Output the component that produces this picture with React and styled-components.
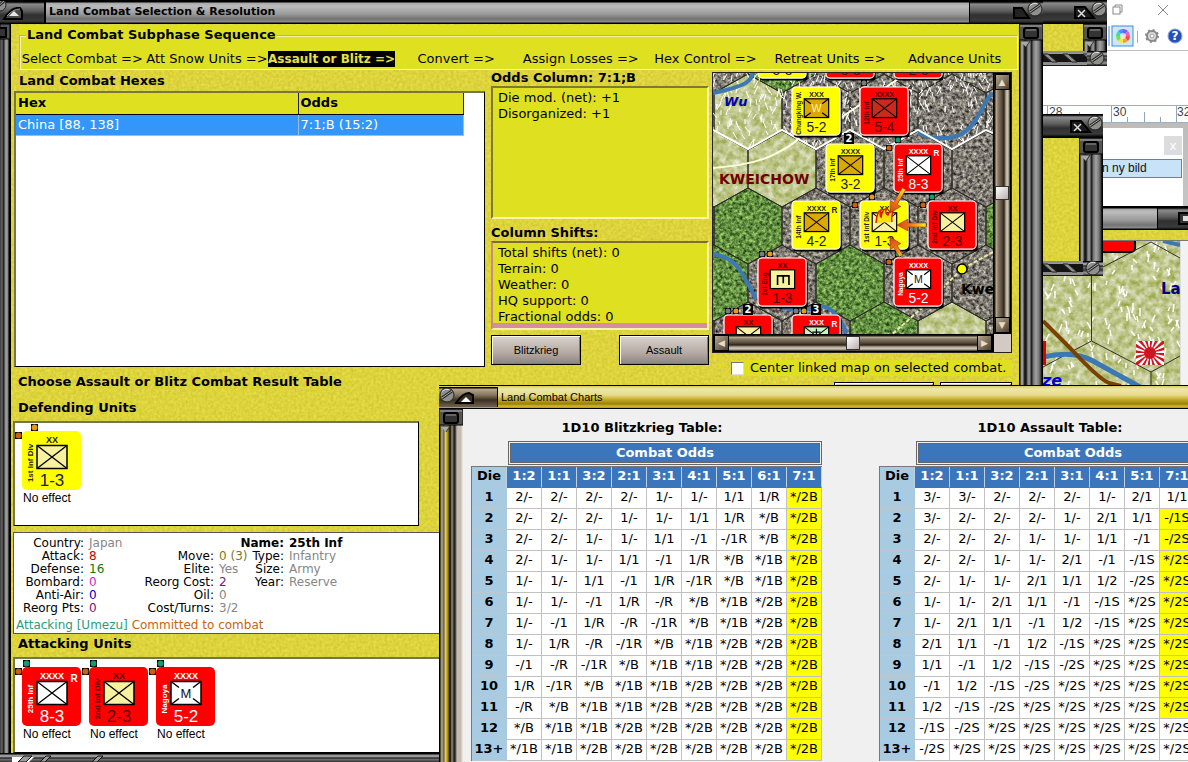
import React from 'react';
import styled, { createGlobalStyle, css } from 'styled-components';

const Global = createGlobalStyle`
  *, *::before, *::after { box-sizing: border-box; }
  body { margin: 0; background: #fff; color: #000; font: 13px/16px "DejaVu Sans", Verdana, sans-serif; }
  h1, h2, h3, p, ol, ul, dl, dd { margin: 0; padding: 0; }
  button { font: inherit; padding: 0; }
`;

/* ---------- desktop ---------- */

const Desktop = styled.main`
  position: relative;
  height: 100vh;
  overflow: hidden;
  background: #fff;
`;

const steelBar = 'linear-gradient(#000 0 2px, #a9a9a9 3px, #bcbcbc 6px, #9a9a9a 14px, #737373 19px, #8c8c8c 22px, #000 23px)';
const darkBar = 'linear-gradient(#000 0 1px, #8b8b8b 3px, #5c5c5c 10px, #303030 14px, #3a3a3a 20px, #000 23px)';
const steelRail = 'linear-gradient(90deg, #000 0 1px, #9b9b94 2px 4px, #2a2a2a 5px, #111 7px, #8d8d8d 9px, #8d8d8d 11px, #222 12px 13px, #6e6e6e 14px, #a2a2a2 17px, #777 20px, #3a3a3a 22px, #000 23px)';
const sand = '#ddd43c';
const lime = '#dfe120';

const AppWindow = styled.section`
  position: absolute;
  display: flex;
  flex-direction: column;
  overflow: hidden;
`;

const MainWindow = styled(AppWindow)`
  top: 0; left: 0; bottom: 0;
  width: calc(100% - 145px);
  z-index: 5;
`;
const ChartsWindow = styled(AppWindow)`
  top: 385px; left: 439px; right: 0; bottom: 0;
  z-index: 8;
  background: #f0f0f0;
  border-top: 1px solid #000;
`;
const PaintWindow = styled(AppWindow)`
  top: 0; right: 0; width: 145px; height: 230px;
  z-index: 1;
  background: #fff;
`;
const ToolWindow = styled(AppWindow)`
  right: ${p => p.$right}px;
  top: ${p => p.$top}px;
  width: ${p => p.$width}px;
  height: ${p => p.$height}px;
  z-index: 4;
`;
const MapWindow = styled(AppWindow)`
  top: 206px; right: 0; bottom: 0; width: 145px;
  z-index: 2;
`;

const TitleBar = styled.header`
  display: flex;
  align-items: center;
  height: 24px;
  flex: none;
  background: ${p => (p.$dark ? darkBar : steelBar)};
  h1 { padding-left: 3px; font-size: 11px; line-height: 16px; font-weight: bold; white-space: nowrap; }
`;

const TitleCap = styled.div`
  width: ${p => p.$width}px;
  height: 22px;
  flex: none;
  background: ${darkBar};
  border-left: ${p => (p.$end ? '1px solid #000' : '0')};
  border-right: ${p => (p.$end ? '0' : '2px solid #000')};
  margin-left: ${p => (p.$end ? 'auto' : '0')};
  svg { display: block; margin-left: ${p => (p.$end ? 'auto' : '0')}; }
`;
const CloseCap = styled.div`
  margin-left: auto;
  svg { display: block; }
`;

const WindowRow = styled.div`
  display: flex;
  flex: 1;
  min-height: 0;
`;
const Rail = styled.div`
  flex: none;
  width: 24px;
  background: ${steelRail};
  svg { display: block; }
`;
const LeftRail = styled.div`
  flex: none;
  width: 11px;
  background: linear-gradient(90deg, #444 0 1px, #777 2px, #222 3px 4px, #8a8a8a 5px, #a0a0a0 7px, #777 8px, #000 9px 11px);
  svg { display: block; }
`;
const BottomFrame = styled.footer`
  height: ${p => p.$height}px;
  flex: none;
  overflow: hidden;
  background: linear-gradient(#000 0 1px, #9a9a9a 2px 4px, #000 5px, #777 6px, #333 9px, #999 12px, #000 15px);
  svg { display: block; }
`;
const Sand = styled.div`
  position: relative;
  display: flex;
  flex-direction: column;
  flex: 1;
  min-width: 0;
  background: ${sand};
  overflow: hidden;
`;
const Grain = styled.svg`
  position: absolute;
  inset: 0;
  width: 100%;
  height: 100%;
`;

function SandGrain({ id }) {
  return (
    <Grain aria-hidden="true">
      <filter id={id} x="0" y="0" width="100%" height="100%" colorInterpolationFilters="sRGB">
        <feTurbulence type="fractalNoise" baseFrequency="0.35" numOctaves="3" seed="4" />
        <feColorMatrix values="0.5 0 0 0 0.62  0.5 0 0 0 0.58  0.3 0 0 0 0.1  0 0 0 0 1" />
      </filter>
      <rect width="100%" height="100%" filter={`url(#${id})`} opacity="0.3" />
    </Grain>
  );
}

function Screw({ cx, cy, r = 7 }) {
  return (
    <g>
      <circle cx={cx} cy={cy} r={r} fill="#8f8f8b" stroke="#222" />
      <path d={`M${cx - r + 2} ${cy - r / 2}a${r} ${r} 0 0 1 ${r} -2`} stroke="#ddd" fill="none" />
      <path d={`M${cx - r + 2} ${cy + 3}L${cx + r - 2} ${cy - 4}`} stroke="#2a2a2a" strokeWidth="3" />
      <path d={`M${cx - r + 2} ${cy + 3}L${cx + r - 2} ${cy - 4}`} stroke="#a9a9a9" />
    </g>
  );
}

function Knob() {
  return (
    <svg width="24" height="24" aria-hidden="true">
      <path d="M0 0h24v16h-24z" fill="#555" stroke="#000" />
      <path d="M1 2h22" stroke="#aaa" />
      <rect x="5" y="4" width="14" height="10" rx="2" fill="#333" stroke="#000" strokeWidth="2" />
      <path d="M7 6h10" stroke="#999" />
      <path d="M1 17h10l-4 6" fill="#aaa" stroke="#333" />
    </svg>
  );
}

function Lattice({ width = 40 }) {
  const bars = [];
  for (let x = 0; x < width; x += 20) bars.push(x);
  return (
    <svg width={width} height="15" aria-hidden="true">
      <path d={`M0 1h${width}M0 13h${width}`} stroke="#8d8d8d" strokeWidth="2" />
      <path d={`M0 3h${width}v8h-${width}z`} fill="#141414" />
      {bars.map(x => <path key={x} d={`M${x} 3l9 8h5l-9 -8z`} fill="#8d8d8d" stroke="#222" />)}
    </svg>
  );
}

function CapStart() {
  return (
    <svg width="44" height="22" aria-hidden="true">
      <Screw cx={0} cy={4} r={6} />
      <path d="M4 18q6 -10 13 -11h3l2 3v8z" fill="#4a4a4a" stroke="#000" strokeWidth="2" />
      <path d="M7 15q6 -7 13 -7" stroke="#999" fill="none" />
      <path d="M9 15l5 -5l5 5z" fill="#e6e6e6" />
    </svg>
  );
}

function CapEnd({ close }) {
  return (
    <svg width="46" height="22" aria-hidden="true">
      {close ? (
        <g>
          <path d="M14 6h10l9 11h-19z" fill="#1b1b1b" stroke="#000" strokeWidth="2" />
          <path d="M17 9l7 7M24 9l-7 7" stroke="#ddd" strokeWidth="1.500" />
        </g>
      ) : (
        <path d="M17 7h8l7 10h-15z" fill="#222" stroke="#000" strokeWidth="2" />
      )}
      <Screw cx={38} cy={8} />
    </svg>
  );
}

/* ---------- counters ---------- */

const PIPS = { grey: '#7c7c7c', gold: '#e69a17', brown: '#c8600f', teal: '#139a72' };

function Pip({ x, y, tone, s = 7 }) {
  return (
    <g>
      <rect x={x} y={y} width={s} height={s} fill="#000" />
      <circle cx={x + s / 2} cy={y + s / 2} r={s * 0.42} fill={PIPS[tone]} />
    </g>
  );
}

const CounterSvg = styled.svg`
  display: block;
  overflow: visible;
  text { font-family: "Liberation Sans", Arial, sans-serif; }
`;

const CROSS = <path d="M15 14.500l30 23M45 14.500l-30 23" stroke="#000" strokeWidth="1.300" />;

function CounterFace({ side, ink, name, size, symbol, box, value, reserve, onMap }) {
  const bg = side === 'china' ? '#ff0' : '#f00';
  return (
    <g>
      {onMap && <rect x="2" y="3" width="59" height="59" rx="4" fill="#000" />}
      <rect width="59" height="59" rx="5" fill={bg} stroke={onMap ? '#fff' : 'none'} strokeWidth="1.500" />
      {size && <text x="30" y="12" fontSize="9" fontWeight="bold" textAnchor="middle" fill={ink}>{size}</text>}
      {reserve && <text x="52" y="15" fontSize="10" fontWeight="bold" textAnchor="middle" fill={ink}>R</text>}
      <rect x="15" y="14.500" width="30" height="23" fill={box} stroke="#000" strokeWidth="1.500" />
      {symbol === 'X' && CROSS}
      {(symbol === 'M' || symbol === 'W') && (
        <g>
          <path d="M15 14.500l8 6M45 14.500l-8 6M15 37.500l8 -6M45 37.500l-8 -6" stroke="#000" strokeWidth="1.500" />
          <text x="30" y="31" fontSize="13" textAnchor="middle" fill={symbol === 'W' ? '#fff3b0' : '#111'}>{symbol}</text>
        </g>
      )}
      {symbol === 'E' && <path d="M24 33v-11h14v11M31 22v9" stroke="#000" strokeWidth="2" fill="none" />}
      {symbol === 'A' && <g>{CROSS}<path d="M30 17v16M25 21h10M23 28q1 6 7 6t7 -6" stroke="#000" strokeWidth="1.500" fill="none" /></g>}
      {value && <text x="30" y="55" fontSize="17" textAnchor="middle" fill={ink}>{value}</text>}
      {name && <text transform="translate(11 32) rotate(-90)" fontSize="8" fontWeight="bold" textAnchor="middle" fill={ink}>{name}</text>}
    </g>
  );
}

const UnitFigure = styled.figure`
  margin: 0;
  width: 59px;
  font: 12px/16px "Liberation Sans", Arial, sans-serif;
  figcaption { white-space: nowrap; padding-left: 1px; }
`;

function UnitCard({ unit, pips }) {
  return (
    <UnitFigure>
      <CounterSvg width="59" height="59" viewBox="0 0 59 59">
        <CounterFace {...unit} />
        {pips.map(p => <Pip key={p.tone} {...p} />)}
      </CounterSvg>
      <figcaption>No effect</figcaption>
    </UnitFigure>
  );
}

/* ---------- campaign map ---------- */

const ROW = { Z: -18, A: 39, B: 96, C: 153, D: 210, E: 267 };
const HEXES = [
  ['Z', 1, 'peak'], ['Z', 69, 'wood'], ['Z', 137, 'peak'], ['Z', 205, 'peak'], ['Z', 273, 'peak'],
  ['A', 35, 'plain'], ['A', 103, 'peak'], ['A', 171, 'peak'], ['A', 239, 'peak'], ['A', -33, 'plain'], ['A', 307, 'peak'],
  ['B', 1, 'plain'], ['B', 69, 'plain'], ['B', 137, 'peak'], ['B', 205, 'peak'], ['B', 273, 'peak'],
  ['C', -33, 'peak'], ['C', 35, 'wood'], ['C', 103, 'peak'], ['C', 171, 'peak'], ['C', 239, 'peak'], ['C', 307, 'wood'],
  ['D', 1, 'wood'], ['D', 69, 'peak'], ['D', 137, 'wood'], ['D', 205, 'peak'], ['D', 273, 'peak'],
  ['E', -33, 'peak'], ['E', 35, 'peak'], ['E', 103, 'peak'], ['E', 171, 'wood'], ['E', 239, 'plain'], ['E', 307, 'peak'],
];
const LAND = { plain: '#bfc78c', wood: '#638f42', peak: '#7f7b73' };
const hexPath = (x, y) => `M${x} ${y - 38}l34 19v38l-34 19l-34 -19v-38z`;

function snowStrokes(x0, y0, w, h, n, seed) {
  let s = seed;
  const rnd = () => { s = (s * 16807) % 2147483647; return s / 2147483647; };
  let d = '';
  for (let i = 0; i < n; i += 1) {
    const x = Math.round(x0 + rnd() * w);
    const y = Math.round(y0 + rnd() * h);
    const dx = Math.round(rnd() * 8 - 4);
    const dy = Math.round(4 + rnd() * 4);
    d += `M${x} ${y}l${dx} ${dy}`;
  }
  return d;
}

const TEXTURES = [['plain', 0.15, 0.9, 0.05], ['wood', 0.3, 1.1, -0.05], ['peak', 0.3, 1.1, -0.05]];

function TerrainFilters({ prefix }) {
  return (
    <defs>
      {TEXTURES.map(([n, f, k, o]) => (
        <filter key={n} id={prefix + n} x="0" y="0" width="100%" height="100%" colorInterpolationFilters="sRGB">
          <feTurbulence type="fractalNoise" baseFrequency={f} numOctaves="4" seed="7" />
          <feColorMatrix values={`${k} 0 0 0 ${o} ${k} 0 0 0 ${o} ${k} 0 0 0 ${o} 0 0 0 0 1`} result="n" />
          <feBlend in="SourceGraphic" in2="n" mode="hard-light" result="even" />
          <feBlend in="n" in2="SourceGraphic" mode="overlay" />
          <feComposite in2="SourceGraphic" operator="in" />
        </filter>
      ))}
    </defs>
  );
}

const MAP_UNITS = [
  { x: 69, y: -18, side: 'china', ink: '#222', symbol: 'X', box: '#dba800', value: '5-3' },
  { x: 137, y: -18, side: 'japan', ink: '#600', symbol: 'X', box: '#fff', value: '3-3' },
  { x: 205, y: -18, side: 'japan', ink: '#600', symbol: 'X', box: '#fff', value: '2-3' },
  { x: 103, y: 39, side: 'china', ink: '#222', name: 'Chungking W.', size: 'XXX', symbol: 'W', box: '#dba800', value: '5-2' },
  { x: 171, y: 39, side: 'japan', ink: '#5a0000', name: '12th Inf', size: 'XXXX', symbol: 'X', box: '#c82a1c', value: '5-4' },
  { x: 137, y: 96, side: 'china', ink: '#222', name: '17th Inf', size: 'XXXX', symbol: 'X', box: '#dba800', value: '3-2' },
  { x: 205, y: 96, side: 'japan', ink: '#fff', name: '25th Inf', size: 'XXXX', symbol: 'X', box: '#fff', value: '8-3', reserve: true },
  { x: 103, y: 153, side: 'china', ink: '#222', name: '14th Inf', size: 'XXXX', symbol: 'X', box: '#dba800', value: '4-2', reserve: true },
  { x: 171, y: 153, side: 'china', ink: '#222', name: '1st Inf Div', size: 'XX', symbol: 'X', box: '#f7f1a0', value: '1-3' },
  { x: 239, y: 153, side: 'japan', ink: '#5a0000', name: '2nd Inf Div', size: 'XX', symbol: 'X', box: '#f7f1a0', value: '2-3' },
  { x: 69, y: 210, side: 'japan', ink: '#5a0000', name: '1st Eng', size: 'XX', symbol: 'E', box: '#f7f1a0', value: '1-3' },
  { x: 205, y: 210, side: 'japan', ink: '#fff', name: 'Nagoya', size: 'XXXX', symbol: 'M', box: '#fff', value: '5-2' },
  { x: 35, y: 267, side: 'japan', ink: '#5a0000', name: 'f Div', size: 'XX', symbol: 'X', box: '#f7f1a0' },
  { x: 103, y: 267, side: 'japan', ink: '#fff', name: 'uanl', size: 'XXX', symbol: 'A', box: '#c8f5c8', reserve: true },
];
const MAP_PIPS = [
  [151, 10, 'grey'], [185, 67, 'teal'], [176, 75, 'brown'], [159, 124, 'gold'], [142, 132, 'brown'],
  [219, 124, 'teal'], [210, 132, 'brown'], [49, 181, 'grey'], [57, 181, 'gold'], [185, 181, 'teal'],
  [176, 189, 'brown'], [15, 238, 'grey'], [23, 238, 'gold'], [83, 238, 'grey'], [91, 238, 'gold'],
];

const MapSvg = styled.svg`
  display: block;
  width: 100%;
  height: 100%;
  background: ${p => p.$ground};
  font-family: "DejaVu Sans", Verdana, sans-serif;
  font-weight: bold;
`;

function Arrow({ x, y, angle, length }) {
  return (
    <path
      transform={`translate(${x} ${y}) rotate(${angle})`}
      d={`M0 0l11 -6v4h${length - 11}v4h-${length - 11}v4z`}
      fill="url(#arrow)" stroke="#8a2a00" strokeWidth="0.500"
    />
  );
}

function CampaignMap() {
  return (
    <MapSvg $ground="#7f7b73" viewBox="0 0 280 261" preserveAspectRatio="xMinYMin slice" role="img" aria-label="Kweichow front">
      <TerrainFilters prefix="front-" />
      <defs>
        <linearGradient id="arrow" gradientUnits="userSpaceOnUse" x1="0" y1="0" x2="28" y2="0"><stop offset="0" stopColor="#d8431a" /><stop offset="0.500" stopColor="#ee7a1a" /><stop offset="1" stopColor="#ffe81a" /></linearGradient>
        <clipPath id="snowline"><path d="M-40 -10H320V57H273l-34 19L205 57L171 76L137 57L103 76L69 57L35 76L0 57z" /></clipPath>
      </defs>
      {['plain', 'wood', 'peak'].map(kind => (
        <g key={kind} filter={`url(#front-${kind})`}>
          {HEXES.filter(h => h[2] === kind).map(h => <path key={h[0] + h[1]} d={hexPath(h[1], ROW[h[0]])} fill={LAND[kind]} />)}
        </g>
      ))}
      <g fill="none" stroke="#2c2c26" strokeWidth="1">
        {HEXES.map(h => <path key={h[0] + h[1]} d={hexPath(h[1], ROW[h[0]])} />)}
      </g>
      <path clipPath="url(#snowline)" d={snowStrokes(0, -5, 280, 80, 380, 77)} stroke="#fff" strokeWidth="1" />
      <g fill="none" stroke="#3c78b4" strokeWidth="4">
        <path d="M0 20q28 -6 34 -11t5 -9" />
        <path d="M205 60q20 8 36 4t27 -26t12 -14" />
        <path d="M0 181q18 3 26 15t17 30" />
        <path d="M69 235q26 3 38 -1t27 26" />
      </g>
      <path d="M0 57L35 76L69 57L103 76L137 57L171 76L205 57L239 76L273 57L280 60" fill="none" stroke="#fff" strokeWidth="2" />
      <path d="M0 95Q40 92 60 82T86 65M120 50L200 -4" fill="none" stroke="#fffde0" strokeWidth="2" />
      <path d="M280 179L249 196L210 234L176 264" fill="none" stroke="#eee9a8" strokeWidth="2" strokeDasharray="4 2" />
      <text x="11" y="33" fontSize="13" fontStyle="italic" fill="#0000b4">Wu</text>
      <text x="6" y="111" fontSize="14" fill="#6e0000">KWEICHOW</text>
      <circle cx="249" cy="196" r="5" fill="#ff0" stroke="#000" strokeWidth="1.500" />
      <text x="248" y="221" fontSize="14">Kwe</text>
      {MAP_UNITS.map(u => (
        <g key={`${u.x},${u.y}`} transform={`translate(${u.x - 24} ${u.y - 25}) scale(0.815)`} fontFamily="Liberation Sans" fontWeight="normal">
          <CounterFace {...u} onMap />
        </g>
      ))}
      {MAP_PIPS.map(([x, y, tone]) => <Pip key={`${x},${y}`} x={x - 3} y={y - 3} tone={tone} s={6} />)}
      {[[136, 65, 2], [35, 236, 2], [103, 236, 3]].map(([x, y, n]) => (
        <g key={x}>
          <rect x={x - 5} y={y - 5} width="10" height="11" fill="#000" />
          <text x={x} y={y + 4} fontSize="10" textAnchor="middle" fill="#fff">{n}</text>
        </g>
      ))}
      <path d="M163 150q1 -12 5 -13q-2 5 0 7q2 -9 5 -8q-1 5 2 6q2 -6 5 -5q-2 9 -1 12" stroke="#d81e00" strokeWidth="1.500" fill="#ffe000" />
      <Arrow x={177} y={140} angle={-60} length={28} />
      <Arrow x={184} y={152} angle={0} length={29} />
      <Arrow x={177} y={164} angle={60} length={22} />
    </MapSvg>
  );
}

const MapGrid = styled.div`
  display: grid;
  grid-template: 261px 18px / minmax(0, 1fr) 18px;
  margin-top: 2px;
  border: 1px solid #222;
  height: 281px;
  overflow: hidden;
`;
const Scroller = styled.div`
  display: flex;
  flex-direction: ${p => (p.$vertical ? 'column' : 'row')};
  align-items: center;
  border: 1px solid #000;
  background: linear-gradient(${p => (p.$vertical ? '90deg' : '180deg')}, #1c1812 0 1px, #c0b5a0 2px, #8a7c66 4px, #54483a 8px, #2a2219 10px, #b8ab96 12px, #d3c8b6 14px, #2a2219 16px);
`;
const Track = styled.span`flex: ${p => p.$share};`;
const ScrollArrow = styled.button`
  width: 15px;
  height: 16px;
  border: 1px solid #000;
  background: linear-gradient(135deg, #b5a68e, #4a3e30);
  color: #e8dcc6;
  font-size: 9px;
  line-height: 12px;
`;
const ScrollThumb = styled.span`
  width: 14px;
  height: 14px;
  background: linear-gradient(135deg, #fff, #b8aeac);
  border: 1px solid #333;
`;
const ScrollCorner = styled.div`background: #d3cac6; border-left: 1px solid #000;`;

/* ---------- phase sequence ---------- */

const SequencePanel = styled.div`
  margin: 1px 1px 0 8px;
  padding-top: 2px;
  background: ${lime};
`;
const SequenceBox = styled.fieldset`
  margin: 0;
  padding: 8px 0 2px;
  border: 1px solid #b4b45c;
  box-shadow: inset 1px 1px #f4f4b0;
  border-right-color: #f7f7c0;
  border-bottom-color: #f7f7c0;
  min-width: 0;
  legend { margin-left: 6px; padding: 0 1px; font-weight: bold; background: ${lime}; }
`;
const Steps = styled.ol`
  display: grid;
  grid-template-columns: repeat(8, minmax(0, 1fr));
  list-style: none;
`;
const Step = styled.li`
  justify-self: center;
  white-space: nowrap;
  ${p => p.$active && css`
    background: #000;
    color: #e8e04a;
    font-weight: bold;
    font-size: 12px;
  `}
`;
const STEPS = ['Select Combat =>', 'Att Snow Units =>', 'Assault or Blitz =>', 'Convert =>', 'Assign Losses =>', 'Hex Control =>', 'Retreat Units =>', 'Advance Units'];

/* ---------- main window body ---------- */

const MainContent = styled.div`
  position: relative;
`;
const TopGrid = styled.div`
  display: grid;
  grid-template-columns: minmax(0, 1fr) 218px 300px;
  column-gap: 3px;
  padding: 0 7px 0 3px;
  height: 297px;
`;
const Column = styled.div`
  min-width: 0;
  display: flex;
  flex-direction: column;
  padding-right: ${p => (p.$lead ? 3 : 0)}px;
`;
const SectionTitle = styled.h2`
  font-size: 13px;
  line-height: 16px;
  padding-left: ${p => (p.$inset ? 5 : 0)}px;
  margin-top: ${p => p.$top || 0}px;
  margin-bottom: ${p => p.$bottom || 0}px;
  white-space: nowrap;
`;
const WhiteBox = styled.div`
  background: #fff;
  border: 2px solid;
  border-color: #77754a #000 #000 #77754a;
`;
const HexBox = styled(WhiteBox)`
  height: 276px;
  border-width: 2px 1px 1px 2px;
`;
const HexTable = styled.table`
  width: 448px;
  table-layout: fixed;
  border-collapse: collapse;
  text-align: left;
  td, th { height: 21px; padding: 0 2px; border-right: 1px solid #222; }
  th { background: ${lime}; border-bottom: 1px solid #000; }
  td { background: #3296fa; color: #fff; border-color: #9cc0d8; border-bottom: 1px solid #9cc0d8; }
  th:first-child { width: 282px; }
`;
const Readout = styled.div`
  height: ${p => p.$height}px;
  flex: none;
  padding: 2px 5px;
  background: ${lime};
  border: 2px solid;
  border-color: #7e7c2c #f7f3b0 #f7f3b0 #7e7c2c;
  ${p => p.$rose && css`
    border-color: #7e6c3c #f7f3b0 #f7f3b0 #c98a80;
    box-shadow: inset 0 -5px #d78da0;
  `}
`;
const ButtonRow = styled.div`
  display: flex;
  justify-content: space-between;
  margin-top: 5px;
`;
const MetalButton = styled.button`
  width: 90px;
  height: 30px;
  border: 1px solid #000;
  box-shadow: inset 1px 1px #fff, inset -1px -1px #857a74;
  background: linear-gradient(#dad3cd, #b5aaa4 60%, #8d827c);
  font: 11px/16px "Liberation Sans", Arial, sans-serif;
`;
const CheckLabel = styled.label`
  display: flex;
  align-items: center;
  gap: 6px;
  margin: 7px 0 6px 19px;
  white-space: nowrap;
  background: ${lime};
  input { appearance: none; width: 13px; height: 13px; margin: 0; flex: none; background: #fff; border: 1px solid; border-color: #777 #ddd #ddd #777; }
`;
const HiddenButtons = styled.div`
  display: flex;
  justify-content: flex-end;
  gap: 6px;
`;
const PeekButton = styled(MetalButton)`width: ${p => p.$width}px;`;

const UnitBox = styled(WhiteBox)`
  display: flex;
  gap: 8px;
  padding: 8px 0 0 7px;
  border-width: 2px 1px 1px 2px;
  height: ${p => p.$height}px;
  width: ${p => (p.$short ? '406px' : '100%')};
`;
const LowerSection = styled.div`padding: 7px 0 0 2px;`;
const InfoBox = styled(WhiteBox)`
  margin: 6px 0 2px;
  height: 102px;
  padding: 2px 0 0;
  border-width: 1px;
  border-color: #555;
`;
const Facts = styled.div`
  display: grid;
  grid-template-columns: 70px 40px 80px 28px 32px 1fr;
  grid-auto-rows: 13px;
  column-gap: 5px;
  font-size: 12px;
  line-height: 16px;
  white-space: nowrap;
  span:nth-child(odd) { text-align: right; }
`;
const Fact = styled.span`
  color: ${p => p.$color || '#000'};
  font-weight: ${p => (p.$bold ? 'bold' : 'normal')};
  grid-column: ${p => p.$col || 'auto'};
`;
const Status = styled.p`
  margin-top: 4px;
  padding-left: 2px;
  font-size: 12px;
  line-height: 16px;
  color: #2a9d78;
  span { color: #c86414; }
`;

const grey = '#868686';
const FACTS = [
  ['Attack:', '8', '#c80000'], ['Move:', '0 (3)', '#7a7a1c'], ['Type:', 'Infantry', grey],
  ['Defense:', '16', '#0a7a0a'], ['Elite:', 'Yes', grey], ['Size:', 'Army', grey],
  ['Bombard:', '0', '#d21ed2'], ['Reorg Cost:', '2', '#78147a'], ['Year:', 'Reserve', grey],
  ['Anti-Air:', '0', '#0000c8'], ['Oil:', '0', grey], ['', '', grey],
  ['Reorg Pts:', '0', '#78147a'], ['Cost/Turns:', '3/2', grey], ['', '', grey],
];

const DEFENDER = { side: 'china', ink: '#222', name: '1st Inf Div', size: 'XX', symbol: 'X', box: '#f7f1a0', value: '1-3' };
const ATTACKERS = [
  { side: 'japan', ink: '#fff', name: '25th Inf', size: 'XXXX', symbol: 'X', box: '#fff', value: '8-3', reserve: true },
  { side: 'japan', ink: '#5a0000', name: '2nd Inf Div', size: 'XX', symbol: 'X', box: '#f7f1a0', value: '2-3' },
  { side: 'japan', ink: '#fff', name: 'Nagoya', size: 'XXXX', symbol: 'M', box: '#fff', value: '5-2' },
];

/* ---------- charts window ---------- */

const GoldTitle = styled.header`
  display: flex;
  align-items: center;
  height: 23px;
  flex: none;
  border-bottom: 1px solid #000;
  background: linear-gradient(#d8ca60, #efe6a8 3px, #e8dc8c 9px, #c0a620 14px, #97800c 18px, #d2b72a 20px, #b89c1c);
  h1 { font: 11px/16px "Liberation Sans", Arial, sans-serif; padding-left: 3px; white-space: nowrap; }
`;
const GoldCap = styled.div`
  width: 59px;
  height: 20px;
  flex: none;
  border-right: 1px solid #000;
  background: linear-gradient(#000 0 1px, #b5a68c 2px, #86775f 8px, #3c3022 13px, #6f6350);
  svg { display: block; }
`;
const GoldRail = styled.div`
  width: 24px;
  flex: none;
  background: linear-gradient(90deg, #000 0 1px, #a09478 2px 4px, #4a3e28 5px, #e8dc80 6px, #c4a41c 8px, #5a4a10 10px, #000 11px, #999078 13px, #222 15px 16px, #c4bcae 18px 22px, #e8e4da 23px);
  svg { display: block; }
`;
const Charts = styled.div`
  display: flex;
  gap: 57px;
  padding: 11px 0 0 8px;
  overflow: hidden;
`;
const Chart = styled.article`
  flex: none;
  width: 351px;
  h2 { font-size: 13px; line-height: 16px; text-align: center; padding-right: 9px; }
`;
const OddsBanner = styled.div`
  margin: 5px 0 1px 37px;
  height: 24px;
  line-height: 18px;
  border: 3px double #666;
  background: #3b76bc;
  background-clip: padding-box;
  color: #fff;
  font-weight: bold;
  text-align: center;
`;
const ChartTable = styled.table`
  border-collapse: separate;
  border-spacing: 0;
  table-layout: fixed;
  width: 351px;
  border-top: 1px solid #777;
  border-left: 1px solid #777;
  text-align: center;
  th, td { height: 21px; padding: 0 0 2px; border-right: 1px solid #c0c0c0; border-bottom: 1px solid #c0c0c0; white-space: nowrap; }
  th { background: #a9cbe2; border-right-color: #a9cbe2; }
  thead th { background: #3b76bc; color: #fff; border-bottom-color: #3b76bc; border-right-color: #c0d0e0; }
  thead th:first-child { width: 35px; background: #a9cbe2; color: #000; border-bottom-color: #a9cbe2; }
  tbody th { border-bottom-color: #bcc8d0; }
`;
const Result = styled.td`
  background: ${p => (p.$hot ? '#ff0' : '#fff')};
`;

const BLITZ_ODDS = ['1:2', '1:1', '3:2', '2:1', '3:1', '4:1', '5:1', '6:1', '7:1'];
const BLITZ = [
  '2/- 2/- 2/- 2/- 1/- 1/- 1/1 1/R */2B',
  '2/- 2/- 2/- 1/- 1/- 1/1 1/R */B */2B',
  '2/- 2/- 1/- 1/- 1/1 -/1 -/1R */B */2B',
  '2/- 1/- 1/- 1/1 -/1 1/R */B */1B */2B',
  '1/- 1/- 1/1 -/1 1/R -/1R */B */1B */2B',
  '1/- 1/- -/1 1/R -/R */B */1B */2B */2B',
  '1/- -/1 1/R -/R -/1R */B */1B */2B */2B',
  '1/- 1/R -/R -/1R */B */1B */2B */2B */2B',
  '-/1 -/R -/1R */B */1B */1B */2B */2B */2B',
  '1/R -/1R */B */1B */1B */2B */2B */2B */2B',
  '-/R */B */1B */1B */2B */2B */2B */2B */2B',
  '*/B */1B */1B */2B */2B */2B */2B */2B */2B',
  '*/1B */1B */2B */2B */2B */2B */2B */2B */2B',
].map(r => r.split(' '));
const ASSAULT_ODDS = ['1:2', '1:1', '3:2', '2:1', '3:1', '4:1', '5:1', '7:1', ''];
const ASSAULT = [
  '3/- 3/- 2/- 2/- 2/- 1/- 2/1 1/1',
  '3/- 2/- 2/- 2/- 1/- 2/1 1/1 -/1S',
  '2/- 2/- 2/- 1/- 1/- 1/1 -/1 -/2S',
  '2/- 2/- 1/- 1/- 2/1 -/1 -/1S */2S',
  '2/- 1/- 1/- 2/1 1/1 1/2 -/2S */2S',
  '1/- 1/- 2/1 1/1 -/1 -/1S */2S */2S',
  '1/- 2/1 1/1 -/1 1/2 -/1S */2S */2S',
  '2/1 1/1 -/1 1/2 -/1S */2S */2S */2S',
  '1/1 -/1 1/2 -/1S -/2S */2S */2S */2S',
  '-/1 1/2 -/1S -/2S */2S */2S */2S */2S',
  '1/2 -/1S -/2S */2S */2S */2S */2S */2S',
  '-/1S -/2S */2S */2S */2S */2S */2S */2S',
  '-/2S */2S */2S */2S */2S */2S */2S */2S',
].map(r => [...r.split(' '), '']);

function ResultChart({ title, odds, rows, isHot }) {
  return (
    <Chart>
      <h2>{title}</h2>
      <OddsBanner>Combat Odds</OddsBanner>
      <ChartTable>
        <thead>
          <tr><th>Die</th>{odds.map((o, i) => <th key={i}>{o}</th>)}</tr>
        </thead>
        <tbody>
          {rows.map((row, r) => (
            <tr key={r}>
              <th>{r === 12 ? '13+' : r + 1}</th>
              {row.map((v, c) => <Result key={c} $hot={isHot(r, c)}>{v}</Result>)}
            </tr>
          ))}
        </tbody>
      </ChartTable>
    </Chart>
  );
}

/* ---------- picture editor behind ---------- */

const EditorTop = styled.div`
  height: 51px;
  flex: none;
  border-bottom: 1px solid #b8c0c8;
  svg { display: block; margin-left: auto; }
`;
const Ruler = styled.div`
  height: 18px;
  flex: none;
  margin-top: 54px;
  border: solid #9ab0c0;
  border-width: 1px 0;
  svg { display: block; margin-left: auto; font: 12px "Liberation Sans", Arial, sans-serif; }
`;
const EditorCanvas = styled.div`
  flex: 1;
  padding: 5px 5px 0 0;
  background: linear-gradient(#bcbcbc, #c8c8c8);
`;
const ToastPanel = styled.div`
  height: 100%;
  background: #fff;
  padding: 8px 1px;
`;
const ToastClose = styled.button`
  display: block;
  margin-left: auto;
  width: 18px;
  height: 19px;
  border: 0;
  background: #dcdcdc;
  color: #fff;
  font-size: 12px;
`;
const ToastItem = styled.a`
  display: block;
  margin-top: 4px;
  padding-left: 57px;
  height: 19px;
  line-height: 17px;
  border: 1px solid #3c8cdc;
  background: #c8e2fa;
  color: #111;
  text-decoration: none;
  white-space: nowrap;
  font-family: "Liberation Sans", Arial, sans-serif;
  font-size: 12px;
`;

function EditorIcons() {
  const hues = ['#ff4a4a', '#ff9a3c', '#f7e83c', '#7ee04a', '#3cd8c0', '#4a90ff', '#7a5cf0', '#e85ce0'];
  return (
    <svg width="80" height="50" aria-hidden="true">
      <rect x="5" y="7" width="7" height="7" fill="#fff" stroke="#888" />
      <path d="M7 7v-2h7v7h-2" fill="none" stroke="#888" />
      <path d="M50 5l10 10M60 5l-10 10" stroke="#888" />
      <path d="M1 26v20" stroke="#3c8cdc" />
      <rect x="4" y="26" width="21" height="20" fill="#cfe6fb" stroke="#3c8cdc" />
      {hues.map((h, i) => {
        const a = (i / 8) * Math.PI * 2;
        const b = ((i + 1) / 8) * Math.PI * 2;
        return <path key={h} fill={h} d={`M15 36L${15 + 7 * Math.cos(a)} ${36 + 7 * Math.sin(a)}A7 7 0 0 1 ${15 + 7 * Math.cos(b)} ${36 + 7 * Math.sin(b)}z`} />;
      })}
      <circle cx="15" cy="36" r="3" fill="#fff" opacity="0.700" />
      <path d="M29.500 31v12" stroke="#aaa" />
      <circle cx="44" cy="36" r="5" fill="#ddd" stroke="#888" strokeWidth="2" />
      <circle cx="44" cy="36" r="6" fill="none" stroke="#888" strokeWidth="2" strokeDasharray="2 2.700" />
      <circle cx="44" cy="36" r="2" fill="#fff" stroke="#999" />
      <circle cx="67" cy="36" r="7" fill="#2450b8" stroke="#8aa4dc" />
      <text x="67" y="40" fontSize="12" fontWeight="bold" textAnchor="middle" fill="#fff">?</text>
    </svg>
  );
}

function RulerTicks() {
  return (
    <svg width="145" height="16" aria-hidden="true">
      <path d="M4.500 0v16M68.500 0v16M133.500 0v16M36.500 6v10M101.500 6v10M20.500 11v5M52.500 11v5M84.500 11v5M117.500 11v5" stroke="#8fa8bc" />
      <g fill="#444" fontSize="12"><text x="6" y="10">28</text><text x="70" y="10">30</text><text x="134" y="10">32</text></g>
    </svg>
  );
}

const OverviewRow = styled.div`
  position: relative;
  display: flex;
  flex: 1;
  min-height: 0;
  margin-top: 10px;
  border-top: 1px solid #777;
`;
const OverviewScroll = styled.div`width: 8px; flex: none; background: #f2f2f2; border-left: 1px solid #ddd;`;

function OverviewMap() {
  const rays = [];
  for (let i = 0; i < 16; i += 1) {
    const a = (i * Math.PI) / 8;
    const b = a + Math.PI / 16;
    rays.push(`M107 112L${107 + 22 * Math.cos(a)} ${112 + 22 * Math.sin(a)}L${107 + 22 * Math.cos(b)} ${112 + 22 * Math.sin(b)}z`);
  }
  return (
    <MapSvg $ground="#bfc78c" role="img" aria-label="Overview map">
      <TerrainFilters prefix="over-" />
      <clipPath id="flag"><rect x="93" y="100" width="28" height="24" /></clipPath>
      <rect width="137" height="600" fill="#bfc78c" filter="url(#over-plain)" />
      <path d={snowStrokes(0, 0, 137, 145, 120, 31)} stroke="#fff" strokeWidth="1.500" />
      <path d="M48.500 26v74M48.500 100L0 126M48.500 100L108 131M108 131v14M108 131l29 -16M60 26L108 1l29 16" stroke="#333" fill="none" />
      <path d="M0 116q30 -7 50 4t47 26" stroke="#3c78b4" strokeWidth="5" fill="none" />
      <path d="M120 0l17 4" stroke="#3c78b4" strokeWidth="4" />
      <path d="M0 80L28 108Q56 138 66 142L78 145" stroke="#7a4000" strokeWidth="4" fill="none" />
      <rect x="40" y="-20" width="52" height="31" rx="4" fill="#f00" stroke="#000" strokeWidth="2" />
      <rect x="0" y="100" width="3" height="24" fill="#d00" />
      <rect x="93" y="100" width="28" height="24" fill="#fff" />
      <g clipPath="url(#flag)" fill="#d01420"><path d={rays.join('')} /><circle cx="107" cy="112" r="6" /></g>
      <text x="118" y="53" fontSize="15" fill="#00007a">La</text>
      <text x="-1" y="145" fontSize="16" fontStyle="italic" fill="#0000d0">ze</text>
    </MapSvg>
  );
}

const TOOL_WINDOWS = [
  { id: 'grain-b', right: 81, top: 0, width: 64, height: 66 },
  { id: 'grain-c', right: 85, top: 114, width: 60, height: 162 },
];

export default function App() {
  return (
    <>
      <Global />
      <Desktop>
        <PaintWindow aria-label="Picture editor">
          <EditorTop><EditorIcons /></EditorTop>
          <Ruler><RulerTicks /></Ruler>
          <EditorCanvas>
            <ToastPanel>
              <ToastClose aria-label="Close">x</ToastClose>
              <ToastItem href="#new">n ny bild</ToastItem>
            </ToastPanel>
          </EditorCanvas>
        </PaintWindow>

        <MapWindow aria-label="Overview">
          <TitleBar>
            <TitleCap $width={31} $end>
              <svg width="30" height="22" aria-hidden="true">
                <rect x="21" y="6" width="12" height="11" fill="#333" stroke="#000" strokeWidth="2" />
                <rect x="25" y="9" width="6" height="5" fill="#ddd" />
              </svg>
            </TitleCap>
          </TitleBar>
          <Sand>
            <SandGrain id="grain-d" />
            <OverviewRow>
              <OverviewMap />
              <OverviewScroll />
            </OverviewRow>
          </Sand>
        </MapWindow>

        {TOOL_WINDOWS.map(w => (
          <ToolWindow key={w.id} $right={w.right} $top={w.top} $width={w.width} $height={w.height}>
            <TitleBar $dark><CloseCap><CapEnd close /></CloseCap></TitleBar>
            <WindowRow>
              <Sand><SandGrain id={w.id} /></Sand>
              <Rail><Knob /></Rail>
            </WindowRow>
            <BottomFrame $height={15}>
              <svg width={w.width} height="15"><Lattice width={w.width - 20} /><Screw cx={w.width - 10} cy={7} /></svg>
            </BottomFrame>
          </ToolWindow>
        ))}

        <MainWindow aria-label="Land Combat Selection & Resolution">
          <TitleBar>
            <TitleCap $width={46}><CapStart /></TitleCap>
            <h1>Land Combat Selection &amp; Resolution</h1>
            <TitleCap $width={74} $end><CapEnd /></TitleCap>
          </TitleBar>
          <WindowRow>
            <LeftRail>
              <svg width="10" height="18" aria-hidden="true">
                <path d="M0 0h10v15h-10z" fill="#555" stroke="#000" />
                <rect x="-4" y="4" width="10" height="9" fill="#333" stroke="#000" strokeWidth="2" />
              </svg>
            </LeftRail>
            <Sand>
              <SandGrain id="grain-a" />
              <MainContent>
                <SequencePanel>
                  <SequenceBox>
                    <legend>Land Combat Subphase Sequence</legend>
                    <Steps>{STEPS.map((s, i) => <Step key={s} $active={i === 2}>{s}</Step>)}</Steps>
                  </SequenceBox>
                </SequencePanel>
                <TopGrid>
                  <Column $lead>
                    <SectionTitle $inset $top={3} $bottom={2}>Land Combat Hexes</SectionTitle>
                    <HexBox>
                      <HexTable>
                        <thead><tr><th>Hex</th><th>Odds</th></tr></thead>
                        <tbody><tr><td>China [88, 138]</td><td>7:1;B (15:2)</td></tr></tbody>
                      </HexTable>
                    </HexBox>
                  </Column>
                  <Column>
                    <SectionTitle>Odds Column: 7:1;B</SectionTitle>
                    <Readout $height={133}>
                      <p>Die mod. (net): +1</p>
                      <p>Disorganized: +1</p>
                    </Readout>
                    <SectionTitle $top={6}>Column Shifts:</SectionTitle>
                    <Readout $height={89} $rose>
                      <p>Total shifts (net): 0</p>
                      <p>Terrain: 0</p>
                      <p>Weather: 0</p>
                      <p>HQ support: 0</p>
                      <p>Fractional odds: 0</p>
                    </Readout>
                    <ButtonRow>
                      <MetalButton>Blitzkrieg</MetalButton>
                      <MetalButton>Assault</MetalButton>
                    </ButtonRow>
                  </Column>
                  <Column>
                    <MapGrid>
                      <CampaignMap />
                      <Scroller $vertical>
                        <ScrollArrow aria-label="Scroll up">▲</ScrollArrow>
                        <Track $share={9} />
                        <ScrollThumb />
                        <Track $share={11} />
                        <ScrollArrow aria-label="Scroll down">▼</ScrollArrow>
                      </Scroller>
                      <Scroller>
                        <ScrollArrow aria-label="Scroll left">◀</ScrollArrow>
                        <Track $share={1} />
                        <ScrollThumb />
                        <Track $share={1} />
                        <ScrollArrow aria-label="Scroll right">▶</ScrollArrow>
                      </Scroller>
                      <ScrollCorner />
                    </MapGrid>
                    <CheckLabel><input type="checkbox" />Center linked map on selected combat.</CheckLabel>
                    <HiddenButtons>
                      <PeekButton $width={100} aria-label="Previous" />
                      <PeekButton $width={72} aria-label="Next" />
                    </HiddenButtons>
                  </Column>
                </TopGrid>
                <LowerSection>
                  <SectionTitle $inset>Choose Assault or Blitz Combat Result Table</SectionTitle>
                  <SectionTitle $inset $top={10} $bottom={5}>Defending Units</SectionTitle>
                  <UnitBox $short $height={105}>
                    <UnitCard unit={DEFENDER} pips={[{ x: -7, y: 1, tone: 'brown' }, { x: 9, y: -7, tone: 'gold' }]} />
                  </UnitBox>
                  <InfoBox>
                    <Facts>
                      <Fact>Country:</Fact><Fact $color={grey}>Japan</Fact>
                      <Fact $bold $col="3 / 6">Name:</Fact><Fact $bold>25th Inf</Fact>
                      {FACTS.flatMap(([label, value, color], i) => [
                        <Fact key={`l${i}`}>{label}</Fact>,
                        <Fact key={`v${i}`} $color={color}>{value}</Fact>,
                      ])}
                    </Facts>
                    <Status>Attacking [Umezu] <span>Committed to combat</span></Status>
                  </InfoBox>
                  <SectionTitle $inset $bottom={5}>Attacking Units</SectionTitle>
                  <UnitBox $height={96}>
                    {ATTACKERS.map(u => (
                      <UnitCard key={u.name} unit={u} pips={[{ x: -7, y: 1, tone: 'brown' }, { x: 1, y: -7, tone: 'teal' }]} />
                    ))}
                  </UnitBox>
                </LowerSection>
              </MainContent>
            </Sand>
            <Rail><Knob /></Rail>
          </WindowRow>
          <BottomFrame $height={9}>
            <svg width="460" height="9" aria-hidden="true">
              <path d="M12 4h22l-5 5h-17z" fill="#fff" />
              <path d="M18 9l6 -6h8l-6 6zM40 9l6 -6h5l-6 6zM92 9l6 -6h5l-6 6z" fill="#999" stroke="#111" />
            </svg>
          </BottomFrame>
        </MainWindow>

        <ChartsWindow aria-label="Land Combat Charts">
          <GoldTitle>
            <GoldCap>
              <svg width="56" height="20" aria-hidden="true">
                <Screw cx={8} cy={8} />
                <path d="M17 16q7 -10 13 -10l4 2v8z" fill="#3c3022" stroke="#000" strokeWidth="2" />
                <path d="M22 15l5 -5l5 5z" fill="#fff" />
              </svg>
            </GoldCap>
            <h1>Land Combat Charts</h1>
          </GoldTitle>
          <WindowRow>
            <GoldRail><Knob /></GoldRail>
            <Charts>
              <ResultChart title="1D10 Blitzkrieg Table:" odds={BLITZ_ODDS} rows={BLITZ} isHot={(r, c) => c === 8} />
              <ResultChart title="1D10 Assault Table:" odds={ASSAULT_ODDS} rows={ASSAULT} isHot={(r, c) => c === 7 && r > 0 && r < 11} />
            </Charts>
          </WindowRow>
        </ChartsWindow>
      </Desktop>
    </>
  );
}
